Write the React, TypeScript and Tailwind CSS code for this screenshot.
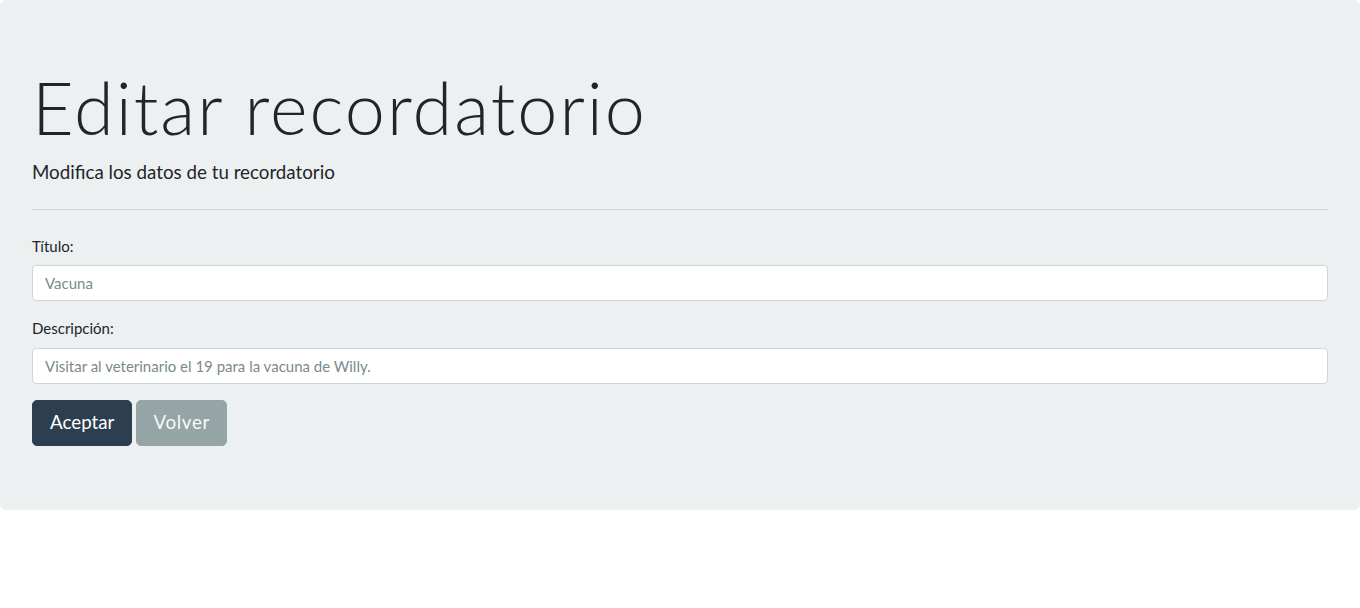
export default function App() {
  return (
    <div className="bg-white font-['Lato','Noto_Sans',sans-serif] text-[#212529]">
      <div className="rounded-[6px] bg-[#ecf0f1] px-8 pt-16 pb-16">
        <h1 className="text-[72px] font-light leading-[1.2] tracking-[2px] mb-2">Editar recordatorio</h1>
        <p className="text-[18.75px] font-normal leading-[1.5]">Modifica los datos de tu recordatorio</p>
        <hr className="mt-[22px] mb-6 border-t border-black/10" />
        <form>
          <div className="mb-[15px]">
            <label className="mb-2 inline-block text-[15px] leading-[1.5]">Título:</label>
            <input
              type="text"
              defaultValue="Vacuna"
              className="block h-[36px] w-full rounded-[4px] border border-[#ced4da] bg-white px-3 text-[15px] text-[#7b8a8b] outline-none"
            />
          </div>
          <div className="mb-4">
            <label className="mb-2 inline-block text-[15px] leading-[1.5]">Descripción:</label>
            <input
              type="text"
              defaultValue="Visitar al veterinario el 19 para la vacuna de Willy."
              className="block h-[36px] w-full rounded-[4px] border border-[#ced4da] bg-white px-3 text-[15px] text-[#7b8a8b] outline-none"
            />
          </div>
          <div className="flex gap-1">
            <button
              type="button"
              className="h-[46px] rounded-[5px] border border-[#2c3e50] bg-[#2c3e50] px-[17px] text-[18.75px] leading-[1.5] text-white"
            >
              Aceptar
            </button>
            <button
              type="button"
              className="h-[46px] rounded-[5px] border border-[#95a5a6] bg-[#95a5a6] px-4 text-[18.75px] leading-[1.5] tracking-[0.7px] text-white/95"
            >
              Volver
            </button>
          </div>
        </form>
      </div>
    </div>
  )
}
